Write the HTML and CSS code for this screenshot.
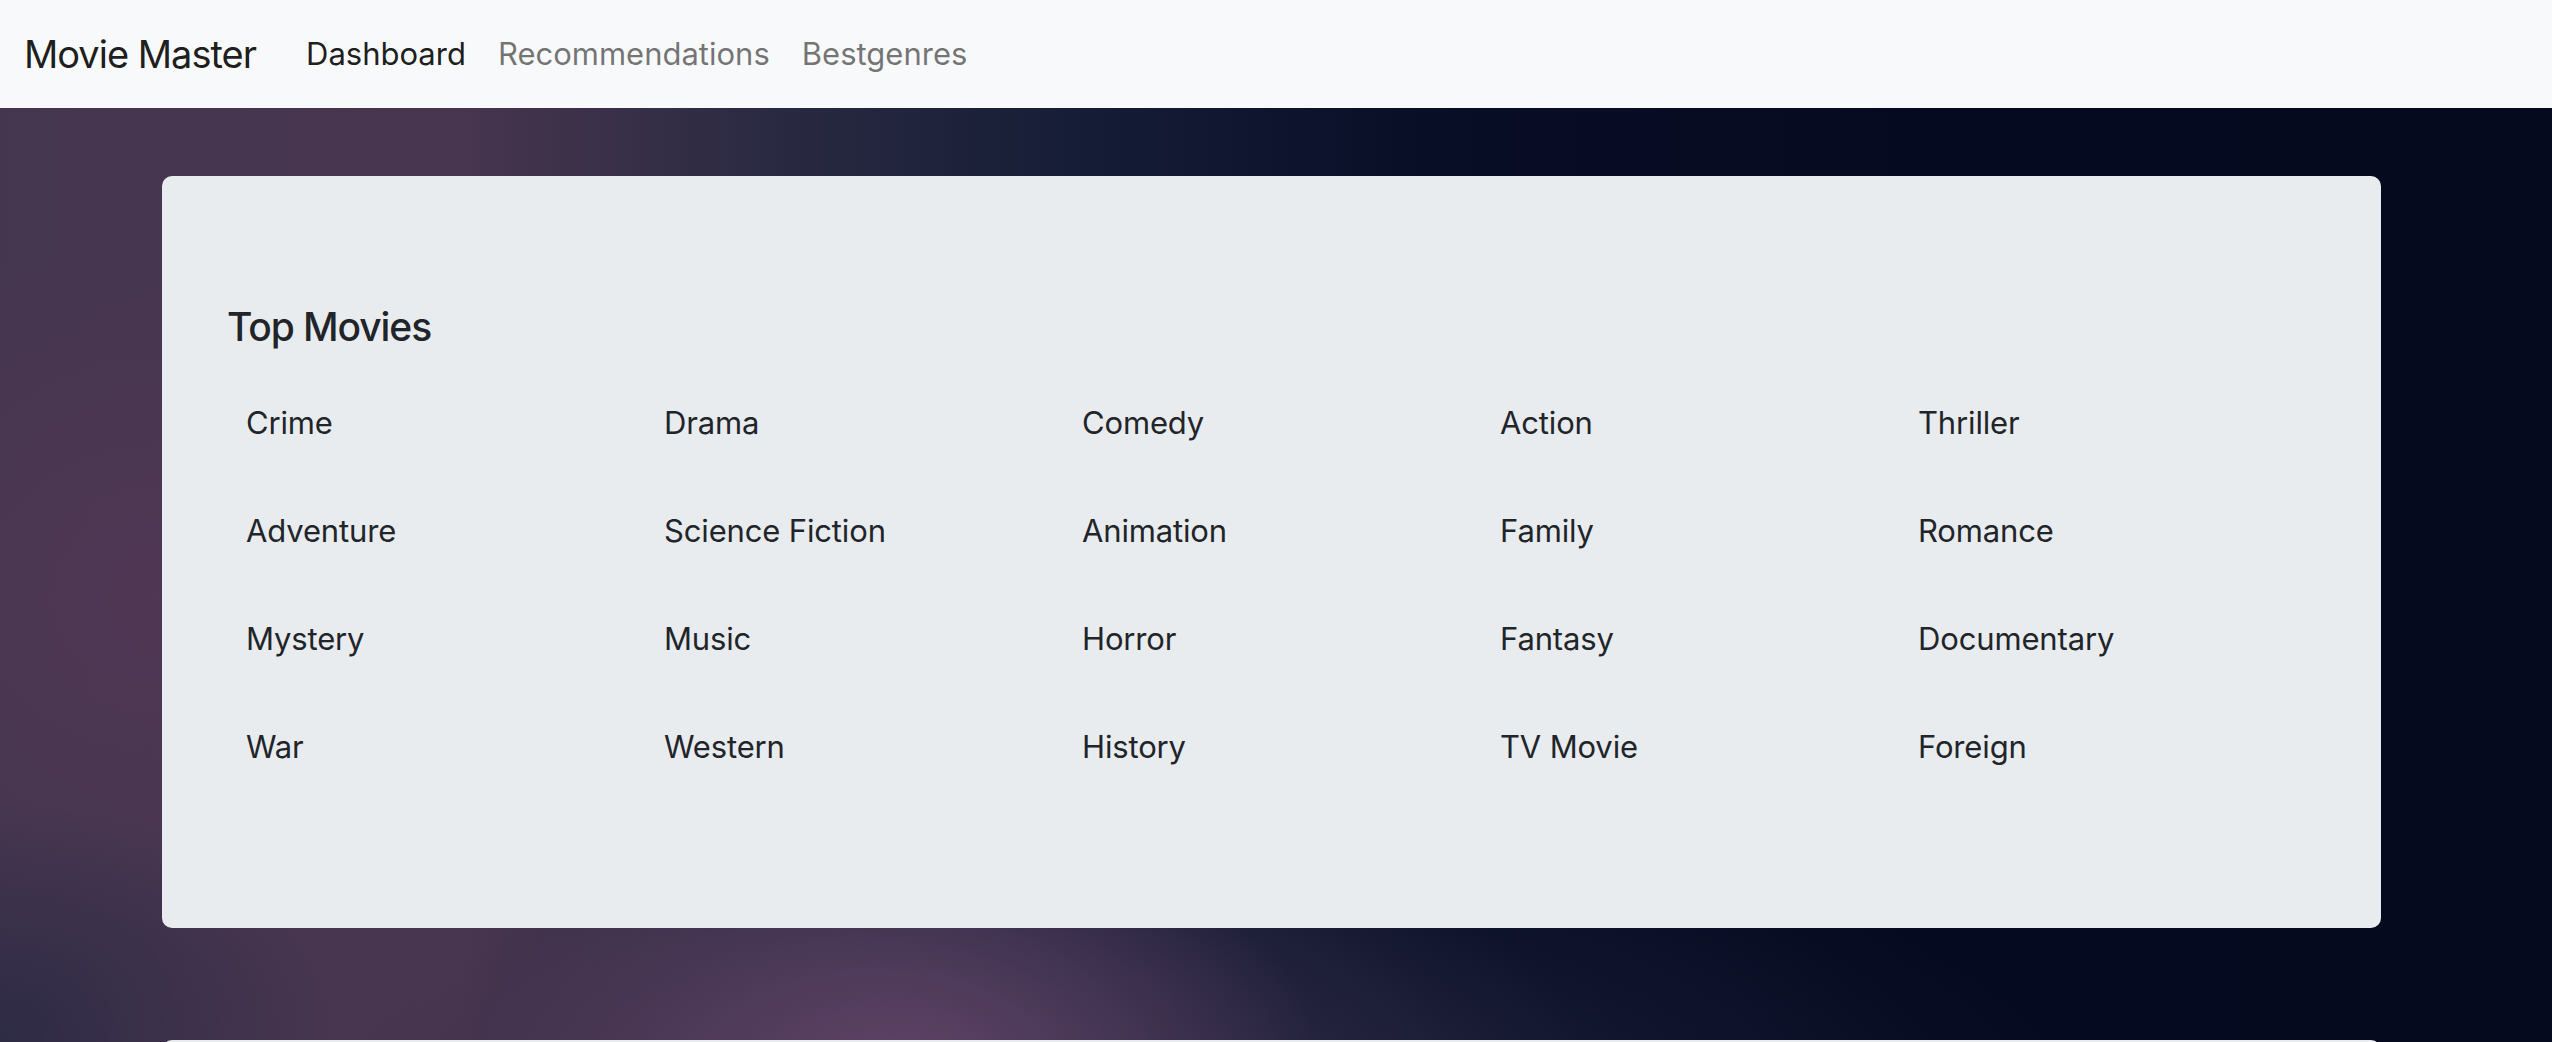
FILE: index.html
```html
<!DOCTYPE html>
<html lang="en">
<head>
<meta charset="utf-8">
<title>Movie Master</title>
<link rel="stylesheet" href="styles.css">
</head>
<body>
<nav class="navbar">
  <a class="brand" href="#">Movie Master</a>
  <ul class="nav-links">
    <li><a class="nav-link active" href="#">Dashboard</a></li>
    <li><a class="nav-link" href="#">Recommendations</a></li>
    <li><a class="nav-link" href="#">Bestgenres</a></li>
  </ul>
</nav>
<main class="page">
  <section class="card">
    <h2 class="card-title">Top Movies</h2>
    <div class="genre-grid">
      <div class="genre">Crime</div>
      <div class="genre">Drama</div>
      <div class="genre">Comedy</div>
      <div class="genre">Action</div>
      <div class="genre">Thriller</div>
      <div class="genre">Adventure</div>
      <div class="genre">Science Fiction</div>
      <div class="genre">Animation</div>
      <div class="genre">Family</div>
      <div class="genre">Romance</div>
      <div class="genre">Mystery</div>
      <div class="genre">Music</div>
      <div class="genre">Horror</div>
      <div class="genre">Fantasy</div>
      <div class="genre">Documentary</div>
      <div class="genre">War</div>
      <div class="genre">Western</div>
      <div class="genre">History</div>
      <div class="genre">TV Movie</div>
      <div class="genre">Foreign</div>
    </div>
  </section>
  <section class="card card-next"></section>
</main>
</body>
</html>
```

FILE: styles.css
```css
* { box-sizing: border-box; }

html, body {
  margin: 0;
  padding: 0;
}

body {
  font-family: Inter, "Noto Sans", "Liberation Sans", sans-serif;
  color: #212529;
  background-color: #050a20;
  background-image:
    radial-gradient(ellipse 560px 380px at 900px 1080px, rgba(100, 70, 106, 0.9), rgba(100, 70, 106, 0) 75%),
    radial-gradient(ellipse 1000px 420px at 800px 1100px, rgba(72, 52, 80, 0.75), rgba(72, 52, 80, 0) 80%),
    radial-gradient(ellipse 1100px 380px at 1200px 1120px, rgba(34, 38, 64, 0.8), rgba(34, 38, 64, 0) 80%),
    radial-gradient(ellipse 420px 300px at 0px 1042px, rgba(44, 42, 68, 0.95), rgba(44, 42, 68, 0) 80%),
    radial-gradient(ellipse 560px 480px at 160px 600px, rgba(86, 56, 88, 0.6), rgba(86, 56, 88, 0) 75%),
    linear-gradient(90deg, #45364f 0%, #48354f 18%, #2a2a42 30%, #161d36 42%, #090e27 56%, #050a20 75%, #050a1f 100%);
  min-height: 1042px;
  overflow: hidden;
}

.navbar {
  height: 108px;
  background: #f8f9fa;
  display: flex;
  align-items: center;
  padding-left: 24px;
}

.brand {
  font-size: 38px;
  letter-spacing: -1px;
  color: rgba(0, 0, 0, 0.9);
  text-decoration: none;
  margin-right: 34px;
  line-height: 1.5;
}

.nav-links {
  list-style: none;
  display: flex;
  margin: 0;
  padding: 0;
}

.nav-link {
  display: block;
  font-size: 31px;
  padding: 0 16px;
  line-height: 1.5;
  color: rgba(0, 0, 0, 0.55);
  text-decoration: none;
}

.nav-link.active {
  color: rgba(0, 0, 0, 0.9);
}

.page {
  padding-top: 68px;
  display: flex;
  flex-direction: column;
  gap: 112px;
}

.card {
  margin-left: 162px;
  width: 2219px;
  background: #e9ecef;
  border-radius: 10px;
  padding: 128px 64px 128px 65px;
}

.card-next {
  min-height: 300px;
}

.card-title {
  margin: 0 0 18px;
  font-size: 39px;
  font-weight: 500;
  letter-spacing: -1.1px;
  line-height: 1.2;
  color: #212529;
}

.genre-grid {
  display: grid;
  grid-template-columns: repeat(5, 1fr);
  grid-auto-rows: 107.8px;
}

.genre {
  display: flex;
  align-items: center;
  padding-left: 19px;
  font-size: 31px;
  letter-spacing: -0.15px;
  color: #212529;
}
```
